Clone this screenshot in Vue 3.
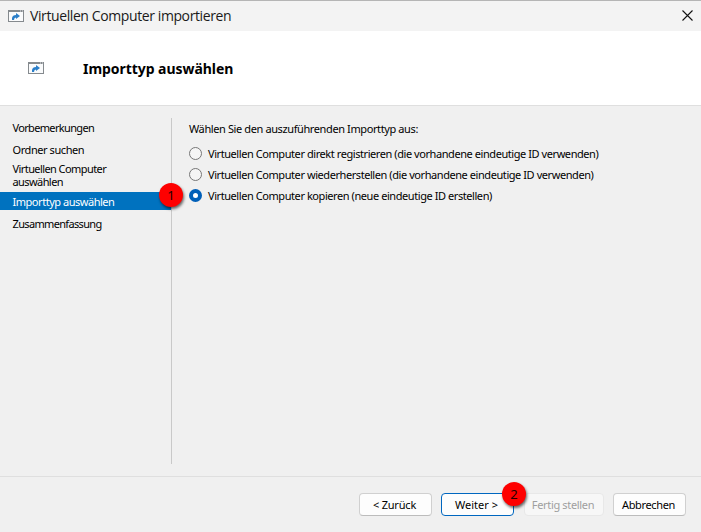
<script setup>
import { ref } from 'vue'

const steps = [
  { text: 'Vorbemerkungen', kind: 'tight' },
  { text: 'Ordner suchen' },
  { text: 'Virtuellen Computer auswählen', kind: 'tall' },
  { text: 'Importtyp auswählen', kind: 'active', badge: '1' },
  { text: 'Zusammenfassung', kind: 'tight' },
]
const options = [
  'Virtuellen Computer direkt registrieren (die vorhandene eindeutige ID verwenden)',
  'Virtuellen Computer wiederherstellen (die vorhandene eindeutige ID verwenden)',
  'Virtuellen Computer kopieren (neue eindeutige ID erstellen)',
]
const selected = ref(2)
</script>

<template>
  <div class="dialog">
    <header class="titlebar">
      <svg class="icon" width="16" height="12" viewBox="0 0 16 12">
        <rect x=".5" y=".5" width="15" height="11" fill="#fafbfc" stroke="#858a8e" />
        <path d="M0 0H16V2H0Z" fill="#858a8e" />
        <path d="M12 1h1M14 1h1" stroke="#e4e6e8" />
        <path d="M4 10V8Q4.500 5 8 5V3L12 6L8 9V7.500Q6 7.500 6 10Z" fill="#2b7fc9" />
      </svg>
      <span class="caption">Virtuellen Computer importieren</span>
      <svg class="close" width="11" height="11" viewBox="0 0 11 11">
        <path d="M.5.500l10 10M10.500.500l-10 10" stroke="#111" stroke-width="1.100" />
      </svg>
    </header>
    <section class="heading">
      <svg class="icon" width="16" height="12" viewBox="0 0 16 12">
        <rect x=".5" y=".5" width="15" height="11" fill="#fafbfc" stroke="#858a8e" />
        <path d="M0 0H16V2H0Z" fill="#858a8e" />
        <path d="M12 1h1M14 1h1" stroke="#e4e6e8" />
        <path d="M4 10V8Q4.500 5 8 5V3L12 6L8 9V7.500Q6 7.500 6 10Z" fill="#2b7fc9" />
      </svg>
      <h1>Importtyp auswählen</h1>
    </section>
    <main class="content">
      <nav class="steps">
        <div v-for="step in steps" :key="step.text" class="step" :class="step.kind">
          <span>{{ step.text }}</span>
          <b v-if="step.badge" class="badge badge-step">{{ step.badge }}</b>
        </div>
      </nav>
      <section class="choices">
        <p>Wählen Sie den auszuführenden Importtyp aus:</p>
        <label v-for="(option, i) in options" :key="option" class="option">
          <input v-model="selected" type="radio" :value="i" />
          <span>{{ option }}</span>
        </label>
      </section>
    </main>
    <footer class="actions">
      <button class="back">&lt; Zurück</button>
      <button class="primary">Weiter &gt;<b class="badge badge-next">2</b></button>
      <button class="finish" disabled>Fertig stellen</button>
      <button class="cancel">Abbrechen</button>
    </footer>
  </div>
</template>

<style>
body { margin: 0; overflow: hidden; }
</style>

<style scoped>
* { box-sizing: border-box; }
.dialog {
  width: 701px;
  height: 532px;
  display: flex;
  flex-direction: column;
  background: #f0f0f0;
  color: #000;
  font: 11px/13px "Noto Sans", sans-serif;
  letter-spacing: -.43px;
}
.titlebar {
  height: 31px;
  flex: none;
  display: flex;
  align-items: center;
  padding: 0 8px;
  border-top: 1px solid #b5b5b5;
  background: #f3f3f3;
}
.icon { display: block; flex: none; }
.titlebar .icon { margin-bottom: 1px; }
.caption {
  margin-left: 6px;
  font: 14px/20px "Open Sans", sans-serif;
  letter-spacing: -.4px;
  color: #1a1a1a;
}
.close { margin: 0 0 2px auto; }
.heading {
  height: 75px;
  flex: none;
  display: flex;
  align-items: center;
  padding-left: 28px;
  border-bottom: 1px solid #dfdfdf;
  background: #fff;
}
h1 {
  margin: 2px 0 0 39px;
  font-size: 14px;
  line-height: 18px;
  font-weight: 700;
  letter-spacing: -.05px;
}
.content { flex: 1; display: flex; padding: 12px 0; }
.steps { width: 172px; border-right: 1px solid #c9c9c9; }
.step {
  position: relative;
  height: 18px;
  margin-bottom: 4px;
  padding: 3px 55px 0 12.5px;
}
.tight { letter-spacing: -.66px; }
.tall { height: 28px; margin-bottom: 2px; padding-top: 0; letter-spacing: -.58px; }
.active { padding-right: 0; background: #0072bf; color: #fff; letter-spacing: -.47px; }
.badge {
  position: absolute;
  z-index: 1;
  width: 24px;
  height: 24px;
  border-radius: 50%;
  background: #fe0000;
  box-shadow: 1px 2px 3px rgba(0, 0, 0, .6);
  color: #200;
  font: 13px/24px "Noto Sans", sans-serif;
  letter-spacing: 0;
  text-align: center;
}
.badge-step { right: -12px; top: -9px; }
.choices { padding-left: 17px; }
.choices p { margin: 4px 0 8px; letter-spacing: -.39px; }
.option { display: flex; align-items: center; height: 21px; }
.option input {
  appearance: none;
  width: 13px;
  height: 13px;
  margin: 0 6px 0 0;
  border: 1px solid #777;
  border-radius: 50%;
  background: #f5f5f5;
}
.option input:checked { border: 4px solid #005fb8; background: #fff; }
.actions {
  height: 56px;
  flex: none;
  display: flex;
  justify-content: flex-end;
  align-items: flex-start;
  gap: 9px;
  padding: 16px 15px 0 0;
  border-top: 1px solid #dfdfdf;
}
button {
  position: relative;
  width: 73px;
  height: 23px;
  padding: 0 2px 0 0;
  border: 1px solid #d0d0d0;
  border-bottom-color: #bcbcbc;
  border-radius: 4px;
  background: #fdfdfd;
  color: #000;
  font: inherit;
  letter-spacing: -.42px;
  white-space: nowrap;
}
.back { letter-spacing: -.2px; }
.primary { z-index: 1; margin-right: 1px; border-color: #0067c0; letter-spacing: 0; }
.finish { width: 80px; border-color: #e8e8e8; background: #f7f7f7; color: #9f9f9f; letter-spacing: -.34px; }
.cancel { letter-spacing: -.36px; }
.badge-next { top: -12px; right: -13px; }
</style>
